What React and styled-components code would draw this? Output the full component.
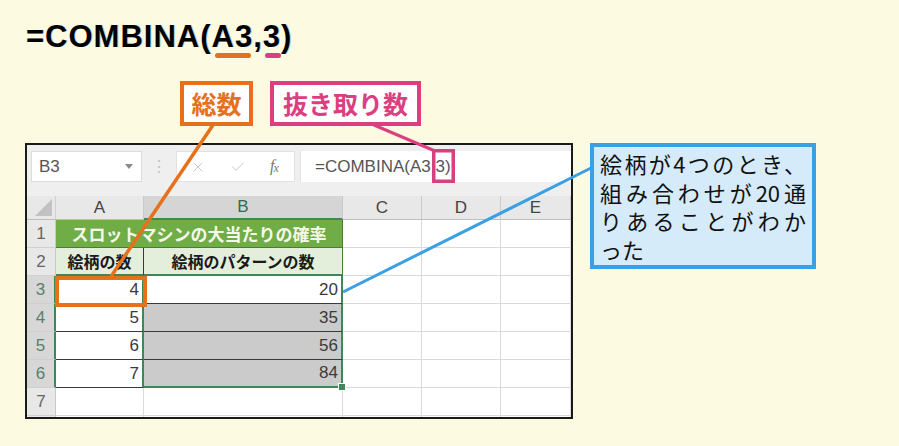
import React from 'react';
import styled, { createGlobalStyle } from 'styled-components';
import { X, Check } from 'lucide-react';

const ORANGE = '#e5711c';
const PINK = '#dc3f7f';
const BLUE = '#3a9fe3';
const GREEN = '#3f875a';
const GRIDLINE = '1px solid #dadada';
const DARK = '1px solid #3a3a3a';
const GREEN_EDGE = `2px solid ${GREEN}`;

const GlobalStyle = createGlobalStyle`
  html, body {
    margin: 0;
    padding: 0;
    background: #fdfae2;
  }
`;

const Page = styled.div`
  position: relative;
  width: 899px;
  height: 446px;
  overflow: hidden;
  box-sizing: border-box;
  padding: 19px 0 0 25px;
  background: #fdfae2;
  font-family: "Liberation Sans", "Noto Sans CJK JP", sans-serif;
`;

const Title = styled.h1`
  margin: 0;
  padding-left: 1px;
  font-size: 31px;
  line-height: 36px;
  font-weight: 700;
  letter-spacing: 1px;
  color: #000;
  text-shadow: 1px 0 0 rgba(90, 160, 230, 0.45);
`;

const Ref = styled.span`
  position: relative;

  &::after {
    content: '';
    position: absolute;
    left: ${(p) => p.$left}px;
    right: ${(p) => p.$right}px;
    bottom: -4px;
    height: 5px;
    border-radius: 3px;
    background: ${(p) => p.$color};
  }
`;

const LabelRow = styled.div`
  display: flex;
  gap: 17px;
  margin: 26px 0 0 155px;
`;

const Label = styled.div`
  box-sizing: border-box;
  width: ${(p) => p.$width}px;
  height: 45px;
  border: 4px solid ${(p) => p.$color};
  background: #fff;
  color: ${(p) => p.$color};
  text-align: center;
  font-family: "Noto Sans CJK JP", sans-serif;
  font-weight: 700;
  font-size: 25px;
  line-height: 37px;
`;

const Main = styled.div`
  display: flex;
  align-items: flex-start;
  gap: 17px;
  margin-top: 17px;
`;

const Sheet = styled.div`
  box-sizing: border-box;
  width: 548px;
  height: 276px;
  border: 2px solid #1a1a1a;
  background: #fff;
  overflow: hidden;
  display: flex;
  flex-direction: column;
`;

const FormulaBar = styled.div`
  box-sizing: border-box;
  height: 51px;
  flex-shrink: 0;
  display: flex;
  align-items: flex-start;
  padding: 6px 0 0 4px;
  background: #efefef;
  color: #555;
`;

const NameBox = styled.div`
  box-sizing: border-box;
  width: 111px;
  height: 31px;
  display: flex;
  align-items: center;
  justify-content: space-between;
  padding: 0 8px 0 7px;
  background: #fff;
  border: 1px solid #dcdcdc;
  font-size: 17px;
`;

const Caret = styled.span`
  width: 0;
  height: 0;
  border-left: 4px solid transparent;
  border-right: 4px solid transparent;
  border-top: 5px solid #8a8a8a;
`;

const Grip = styled.div`
  width: 34px;
  text-align: center;
  line-height: 31px;
  font-size: 16px;
  color: #c4c4c4;
`;

const FxGroup = styled.div`
  box-sizing: border-box;
  width: 119px;
  height: 31px;
  display: flex;
  align-items: center;
  gap: 24px;
  padding-left: 13px;
  background: #fff;
  border: 1px solid #e2e2e2;
  color: #c8c8c8;
`;

const FxText = styled.span`
  font-family: "Liberation Serif", serif;
  font-style: italic;
  font-size: 16px;
  color: #777;
  letter-spacing: -1px;

  & > sub {
    font-size: 12px;
    vertical-align: -1px;
  }
`;

const FormulaInput = styled.div`
  box-sizing: border-box;
  flex: 1;
  height: 31px;
  margin-left: 5px;
  padding-left: 14px;
  background: #fff;
  border-left: 1px solid #e2e2e2;
  font-size: 17px;
  line-height: 31px;
  color: #555;
`;

const Grid = styled.div`
  display: grid;
  grid-template-columns: 29px 88px 199px 79px 79px 1fr;
  grid-template-rows: 24px repeat(8, 28px);
  background: #fff;
  font-size: 17px;
`;

const Corner = styled.div`
  position: relative;
  box-sizing: border-box;
  background: #e8e8e8;
  border-right: 1px solid #cfcfcf;
  border-bottom: 1px solid #bdbdbd;

  &::after {
    content: '';
    position: absolute;
    right: 3px;
    bottom: 3px;
    width: 17px;
    height: 17px;
    background: #c2c2c2;
    clip-path: polygon(100% 0, 100% 100%, 0 100%);
  }
`;

const ColHead = styled.div`
  box-sizing: border-box;
  display: flex;
  align-items: center;
  justify-content: center;
  background: ${(p) => (p.$selected ? '#d5d5d5' : '#e8e8e8')};
  color: ${(p) => (p.$selected ? '#2f6e4c' : '#444')};
  border-right: 1px solid #cacaca;
  border-bottom: ${(p) => (p.$selected ? `2px solid ${GREEN}` : '1px solid #bdbdbd')};
`;

const RowHead = styled.div`
  box-sizing: border-box;
  display: flex;
  align-items: center;
  justify-content: center;
  background: ${(p) => (p.$selected ? '#d7d7d7' : '#e8e8e8')};
  color: ${(p) => (p.$selected ? '#5a7f68' : '#666')};
  border-right: ${(p) => (p.$selected ? GREEN_EDGE : '1px solid #c9c9c9')};
  border-bottom: 1px solid #d0d0d0;
`;

const Cell = styled.div`
  position: relative;
  box-sizing: border-box;
  display: flex;
  align-items: center;
  justify-content: ${(p) => p.$align || 'flex-start'};
  padding: 0 3px;
  grid-column: ${(p) => (p.$span ? `span ${p.$span}` : 'auto')};
  background: ${(p) => p.$bg || '#fff'};
  color: #3a3a3a;
  border-right: ${(p) => p.$right || GRIDLINE};
  border-bottom: ${(p) => p.$bottom || GRIDLINE};
`;

const HeadingCell = styled(Cell)`
  justify-content: center;
  font-family: "Noto Sans CJK JP", sans-serif;
  font-weight: 700;
  font-size: ${(p) => (p.$banner ? 17 : 16)}px;
  color: ${(p) => (p.$banner ? '#f6f9e9' : '#1a1a1a')};
`;

const FillHandle = styled.span`
  position: absolute;
  right: -5px;
  bottom: -5px;
  z-index: 2;
  width: 6px;
  height: 6px;
  background: ${GREEN};
  border: 1px solid #fff;
`;

const Callout = styled.div`
  box-sizing: border-box;
  width: 226px;
  height: 126px;
  padding: 2px 6px;
  border: 4px solid ${BLUE};
  background: #d5ebf9;
  color: #111;
  font-family: "Noto Sans CJK JP", sans-serif;
  font-size: 22px;
  line-height: 28.5px;
`;

const CalloutLine = styled.div`
  height: 28.5px;
  text-align: justify;
  text-align-last: ${(p) => (p.$last ? 'left' : 'justify')};
`;

const Overlay = styled.svg`
  position: absolute;
  top: 0;
  left: 0;
  pointer-events: none;
`;

const columns = ['A', 'B', 'C', 'D', 'E'];
const rows = [
  { n: 3, count: 4, patterns: 20 },
  { n: 4, count: 5, patterns: 35 },
  { n: 5, count: 6, patterns: 56 },
  { n: 6, count: 7, patterns: 84 },
];

function EmptyCells({ count }) {
  return Array.from({ length: count }, (_, i) => <Cell key={i} />);
}

export default function App() {
  return (
    <Page>
      <GlobalStyle />
      <Title>
        =COMBINA(
        <Ref $color={ORANGE} $left={3} $right={2}>A3</Ref>,
        <Ref $color={PINK} $left={2} $right={0}>3</Ref>)
      </Title>

      <LabelRow>
        <Label $color={ORANGE} $width={73}>総数</Label>
        <Label $color={PINK} $width={151}>抜き取り数</Label>
      </LabelRow>

      <Main>
        <Sheet>
          <FormulaBar>
            <NameBox>
              B3
              <Caret />
            </NameBox>
            <Grip>⋮</Grip>
            <FxGroup>
              <X size={16} strokeWidth={1.5} />
              <Check size={16} strokeWidth={1.5} />
              <FxText>f<sub>x</sub></FxText>
            </FxGroup>
            <FormulaInput>=COMBINA(A3,3)</FormulaInput>
          </FormulaBar>

          <Grid>
            <Corner />
            {columns.map((c) => (
              <ColHead key={c} $selected={c === 'B'}>{c}</ColHead>
            ))}

            <RowHead>1</RowHead>
            <HeadingCell $banner $span={2} $bg="#70ad47" $right="1px solid #4a7f2e" $bottom="1px solid #4a7f2e">
              スロットマシンの大当たりの確率
            </HeadingCell>
            <EmptyCells count={3} />

            <RowHead>2</RowHead>
            <HeadingCell $bg="#e3efdb" $right={DARK} $bottom={GREEN_EDGE}>絵柄の数</HeadingCell>
            <HeadingCell $bg="#e3efdb" $right="1px solid #4a7f2e" $bottom={GREEN_EDGE}>絵柄のパターンの数</HeadingCell>
            <EmptyCells count={3} />

            {rows.map((r, i) => {
              const last = i === rows.length - 1;
              return (
                <React.Fragment key={r.n}>
                  <RowHead $selected>{r.n}</RowHead>
                  <Cell $align="flex-end" $right={GREEN_EDGE} $bottom={DARK}>{r.count}</Cell>
                  <Cell
                    $align="flex-end"
                    $bg={i === 0 ? '#fff' : '#cbcbcb'}
                    $right={GREEN_EDGE}
                    $bottom={last ? GREEN_EDGE : DARK}
                  >
                    {r.patterns}
                    {last && <FillHandle />}
                  </Cell>
                  <EmptyCells count={3} />
                </React.Fragment>
              );
            })}

            <RowHead>7</RowHead>
            <EmptyCells count={5} />
            <RowHead />
            <EmptyCells count={5} />
          </Grid>
        </Sheet>

        <Callout>
          <CalloutLine>絵柄が4つのとき、</CalloutLine>
          <CalloutLine>組み合わせが20通</CalloutLine>
          <CalloutLine>りあることがわか</CalloutLine>
          <CalloutLine $last>った</CalloutLine>
        </Callout>
      </Main>

      <Overlay width="899" height="446" viewBox="0 0 899 446">
        <line x1="213" y1="125" x2="110" y2="278" stroke={ORANGE} strokeWidth="3.5" />
        <rect x="57" y="278" width="88" height="27" fill="none" stroke={ORANGE} strokeWidth="4" />
        <line x1="374" y1="125" x2="435" y2="151" stroke={PINK} strokeWidth="3" />
        <rect x="433.75" y="150.75" width="19.5" height="30.5" fill="none" stroke={PINK} strokeWidth="3.5" />
        <line x1="591" y1="168" x2="343" y2="292" stroke={BLUE} strokeWidth="3" />
      </Overlay>
    </Page>
  );
}
